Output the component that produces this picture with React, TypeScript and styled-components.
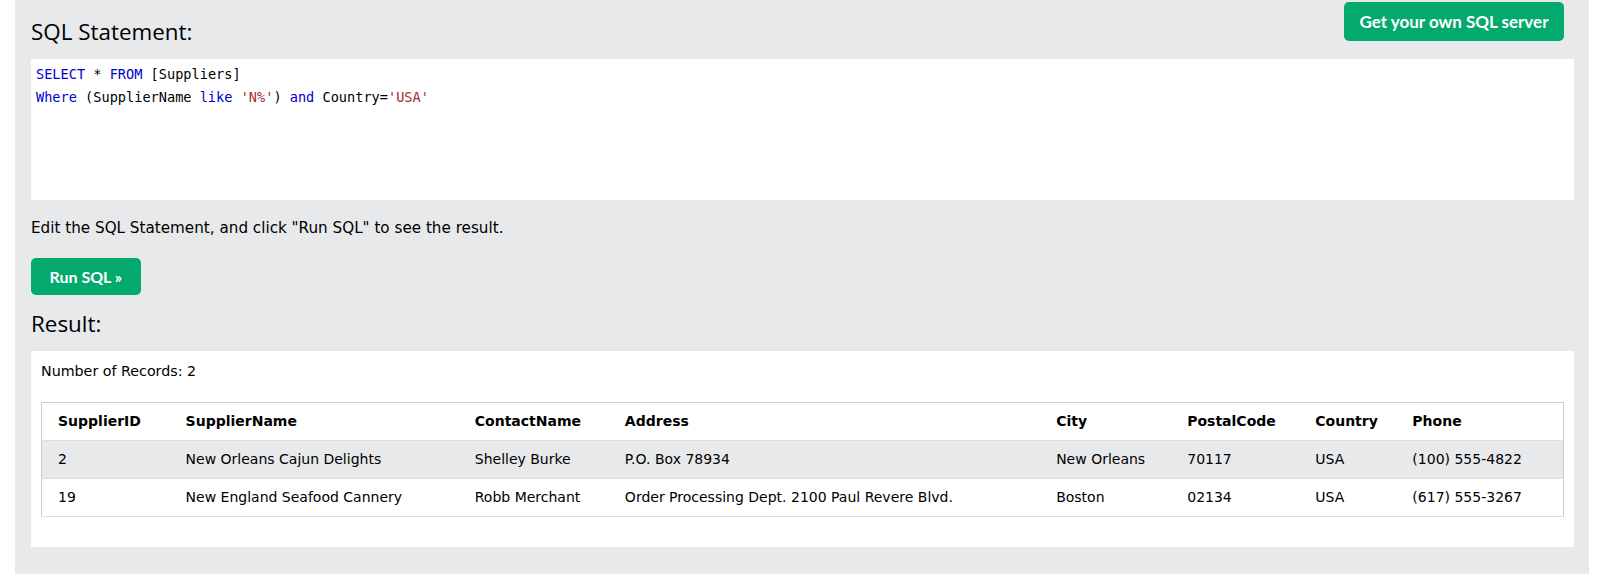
import React from "react";
import styled, { createGlobalStyle } from "styled-components";

const GlobalStyle = createGlobalStyle`
  html, body {
    margin: 0;
    padding: 0;
    background: #ffffff;
  }
  body {
    font-family: "DejaVu Sans", Verdana, sans-serif;
    color: #000;
  }
`;

const Page = styled.div`
  padding: 0 14px 0 15px;
`;

const Panel = styled.div`
  background: #e7e9eb;
  min-height: 574px;
  box-sizing: border-box;
  padding: 2px 15px 0 16px;
  display: flex;
  flex-direction: column;
`;

const HeaderRow = styled.div`
  display: flex;
  justify-content: space-between;
  align-items: flex-start;
  padding-right: 10px;
  margin-bottom: 12px;
`;

const Heading = styled.h2<{ $top?: number }>`
  margin: ${(p) => p.$top ?? 0}px 0 0 0;
  font-family: "Open Sans", "Noto Sans", sans-serif;
  font-weight: 400;
  font-size: 22.4px;
  line-height: 30px;
  color: #000;
`;

const ResultHeading = styled(Heading)`
  margin-bottom: 12px;
`;

const GreenButton = styled.button<{ $size: number; $h: number; $px: number }>`
  display: inline-flex;
  align-items: center;
  justify-content: center;
  height: ${(p) => p.$h}px;
  padding: 0 ${(p) => p.$px}px;
  border: none;
  border-radius: 5px;
  background: #04aa6d;
  color: #fff;
  font-family: "Lato", "Open Sans", sans-serif;
  font-weight: 700;
  font-size: ${(p) => p.$size}px;
  cursor: pointer;
  white-space: nowrap;
`;

const RunRow = styled.div`
  display: flex;
`;

const CodeBox = styled.div`
  background: #fff;
  height: 141px;
  box-sizing: border-box;
  padding: 4px 5px;
  font-family: "DejaVu Sans Mono", "Liberation Mono", monospace;
  font-size: 13.6px;
  line-height: 23px;
  color: #000;
`;

const CodeLine = styled.div`
  white-space: pre;
`;

const Kw = styled.span`
  color: #0000cd;
`;

const Str = styled.span`
  color: #a52a2a;
`;

const Note = styled.p`
  margin: 17px 0 18px;
  font-size: 15.2px;
  line-height: 22.5px;
`;

const ResultBox = styled.div`
  background: #fff;
  padding: 10px;
  font-size: 14px;
  line-height: 21px;
`;

const Count = styled.div`
  font-size: 14.25px;
`;

const Table = styled.table`
  width: 100%;
  table-layout: fixed;
  border-collapse: collapse;
  border: 1px solid #ccc;
  margin: 20px 0;
  font-size: 14px;
  line-height: 21px;
`;

const Col = styled.col<{ $w: number }>`
  width: ${(p) => p.$w}px;
`;

const Row = styled.tr<{ $striped?: boolean }>`
  border-bottom: 1px solid #ddd;
  background: ${(p) => (p.$striped ? "#e7e9eb" : "#fff")};
`;

const Th = styled.th`
  text-align: left;
  font-weight: 700;
  padding: 8px;
  white-space: nowrap;
  &:first-child {
    padding-left: 16px;
  }
`;

const Td = styled.td`
  text-align: left;
  padding: 8px;
  white-space: nowrap;
  vertical-align: top;
  &:first-child {
    padding-left: 16px;
  }
`;

const columns = [
  { name: "SupplierID", w: 136 },
  { name: "SupplierName", w: 289 },
  { name: "ContactName", w: 150 },
  { name: "Address", w: 431 },
  { name: "City", w: 131 },
  { name: "PostalCode", w: 128 },
  { name: "Country", w: 97 },
  { name: "Phone", w: 159 },
];

const rows = [
  ["2", "New Orleans Cajun Delights", "Shelley Burke", "P.O. Box 78934", "New Orleans", "70117", "USA", "(100) 555-4822"],
  ["19", "New England Seafood Cannery", "Robb Merchant", "Order Processing Dept. 2100 Paul Revere Blvd.", "Boston", "02134", "USA", "(617) 555-3267"],
];

export default function App() {
  return (
    <>
      <GlobalStyle />
      <Page>
        <Panel>
          <HeaderRow>
            <Heading $top={15}>SQL Statement:</Heading>
            <GreenButton $size={17} $h={39} $px={15.5}>Get your own SQL server</GreenButton>
          </HeaderRow>
          <CodeBox>
            <CodeLine>
              <Kw>SELECT</Kw> * <Kw>FROM</Kw> [Suppliers]
            </CodeLine>
            <CodeLine>
              <Kw>Where</Kw> (SupplierName <Kw>like</Kw> <Str>'N%'</Str>) <Kw>and</Kw> Country=<Str>'USA'</Str>
            </CodeLine>
          </CodeBox>
          <Note>Edit the SQL Statement, and click "Run SQL" to see the result.</Note>
          <RunRow>
            <GreenButton $size={16} $h={37} $px={18.5}>Run SQL »</GreenButton>
          </RunRow>
          <ResultHeading $top={14}>Result:</ResultHeading>
          <ResultBox>
            <Count>Number of Records: 2</Count>
            <Table>
              <colgroup>
                {columns.map((c) => (
                  <Col key={c.name} $w={c.w} />
                ))}
              </colgroup>
              <thead>
                <Row>
                  {columns.map((c) => (
                    <Th key={c.name}>{c.name}</Th>
                  ))}
                </Row>
              </thead>
              <tbody>
                {rows.map((r, i) => (
                  <Row key={i} $striped={i % 2 === 0}>
                    {r.map((v, j) => (
                      <Td key={j}>{v}</Td>
                    ))}
                  </Row>
                ))}
              </tbody>
            </Table>
          </ResultBox>
        </Panel>
      </Page>
    </>
  );
}
